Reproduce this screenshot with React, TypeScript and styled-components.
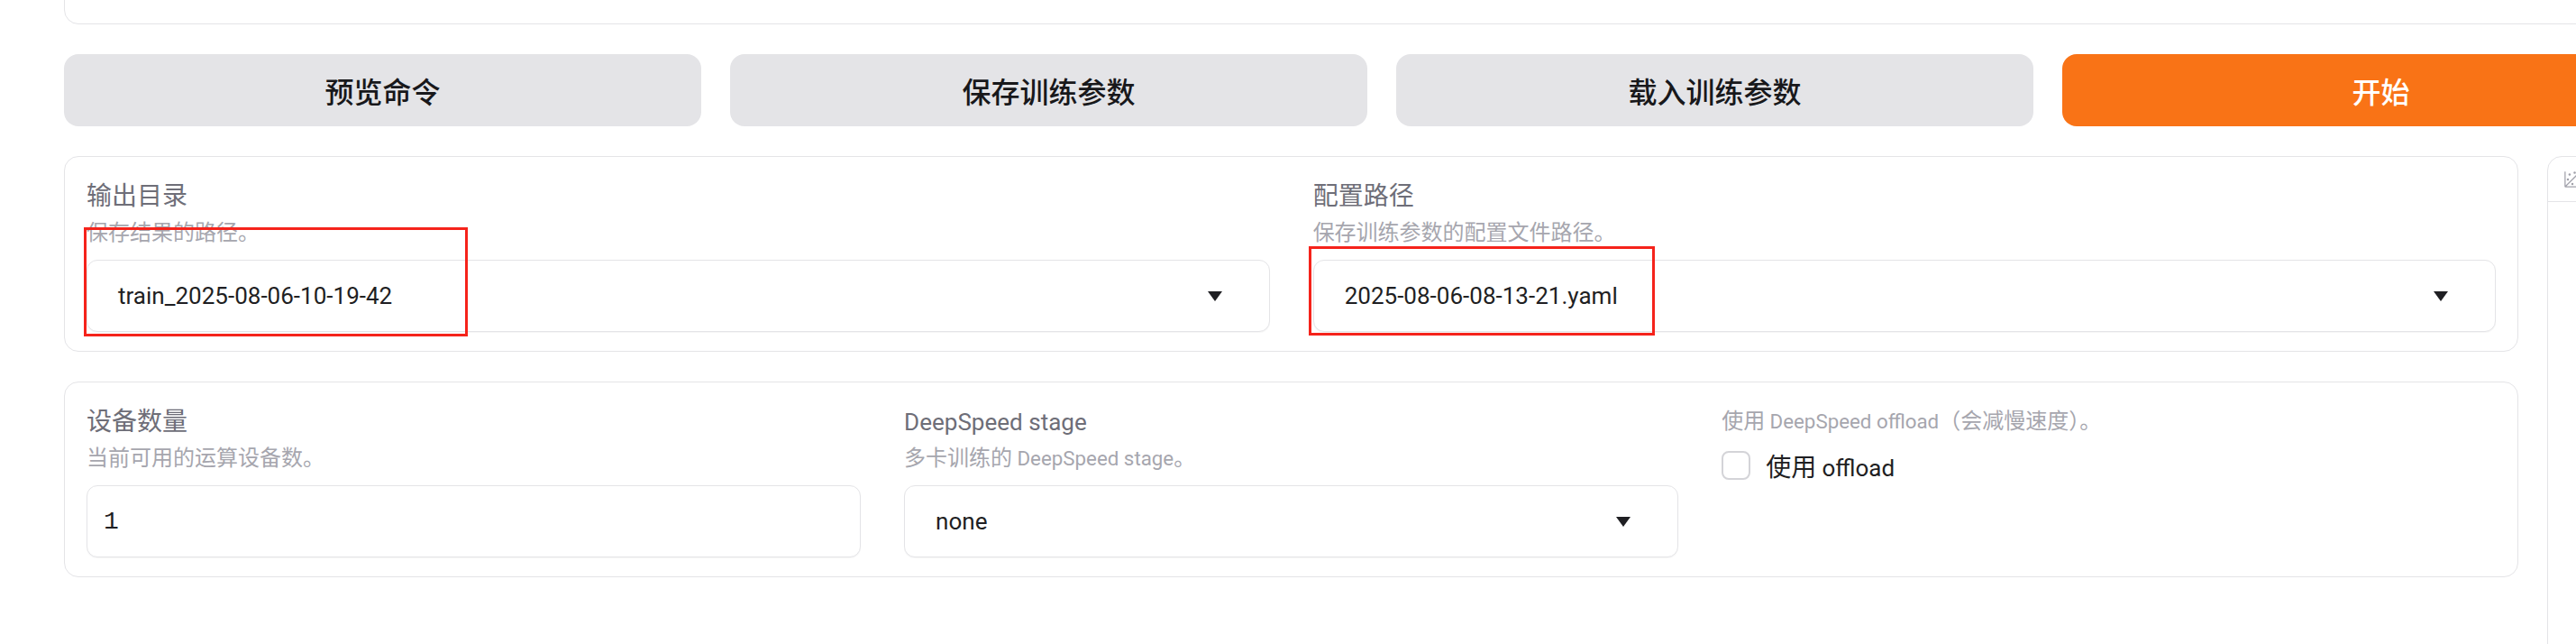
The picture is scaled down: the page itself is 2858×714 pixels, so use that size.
import React from "react";
import styled, { createGlobalStyle } from "styled-components";

const GlobalStyle = createGlobalStyle`
  html, body {
    margin: 0;
    padding: 0;
    background: #ffffff;
    overflow: hidden;
  }
  body {
    font-family: "Noto Sans CJK SC", "Noto Sans", sans-serif;
    color: #27272a;
  }
  * { box-sizing: border-box; }
`;

const Page = styled.div`
  position: relative;
  width: 3663px;
  margin-left: 71px;
  display: flex;
  flex-direction: column;
  gap: 33px;
`;

const TopCard = styled.div`
  height: 100px;
  margin-top: -73px;
  border: 1px solid #e4e4e7;
  border-radius: 16px;
  background: #fff;
`;

const ButtonRow = styled.div`
  display: flex;
  gap: 32px;
  height: 80px;
`;

const ActionButton = styled.button<{ $primary?: boolean }>`
  flex: 0 0 707px;
  border: none;
  border-radius: 16px;
  background: ${(p) => (p.$primary ? "#f97316" : "#e4e4e7")};
  color: ${(p) => (p.$primary ? "#ffffff" : "#18181b")};
  font-family: "Noto Sans CJK SC", sans-serif;
  font-size: 32px;
  font-weight: 500;
  cursor: pointer;
`;

const LowerRow = styled.div`
  display: flex;
  gap: 32px;
  align-items: flex-start;
`;

const MainColumn = styled.div`
  flex: 3;
  display: flex;
  flex-direction: column;
  gap: 33px;
`;

const SideColumn = styled.div`
  flex: 1;
`;

const Card = styled.div<{ $cols: number }>`
  display: grid;
  grid-template-columns: repeat(${(p) => p.$cols}, 1fr);
  border: 1px solid #e4e4e7;
  border-radius: 16px;
  background: #fff;
`;

const Field = styled.div`
  display: flex;
  flex-direction: column;
  padding: 20px 24px 21px;
  min-width: 0;
`;

const Latin = styled.span`
  font-family: Roboto, "Noto Sans", sans-serif;
  font-size: 0.93em;
  line-height: 1;
`;

const Label = styled.div`
  height: 42px;
  font-size: 28px;
  line-height: 42px;
  color: #6e6e78;
`;

const Info = styled.div<{ $top?: boolean }>`
  height: ${(p) => (p.$top ? "42px" : "36px")};
  font-size: 24px;
  line-height: ${(p) => (p.$top ? "42px" : "36px")};
  margin-top: ${(p) => (p.$top ? "0" : "2px")};
  color: #a6a6ae;
`;

const InputBox = styled.div<{ $padLeft?: number }>`
  margin-top: 14px;
  height: 80px;
  display: flex;
  align-items: center;
  justify-content: space-between;
  padding: 0 52px 0 ${(p) => p.$padLeft ?? 34}px;
  border: 1px solid #e4e4e7;
  border-radius: 12px;
  box-shadow: 0 1px 1px rgba(0, 0, 0, 0.04);
  background: #fff;
  font-size: 28px;
  color: #1f1f23;
`;

const MonoValue = styled.span`
  font-family: "Liberation Mono", "DejaVu Sans Mono", monospace;
  font-size: 28px;
  color: #1f1f23;
`;

const CheckRow = styled.label`
  margin-top: 14px;
  height: 32px;
  display: flex;
  align-items: center;
  gap: 17px;
  font-size: 28px;
  line-height: 32px;
  color: #1f1f23;
`;

const CheckBox = styled.span`
  width: 32px;
  height: 32px;
  border: 2px solid #d4d4d8;
  border-radius: 8px;
  background: #fff;
  flex: none;
`;

const PlotPanel = styled.div`
  height: 800px;
  border: 1px solid #e4e4e7;
  border-radius: 16px;
  background: #fff;
`;

const PlotLabel = styled.div`
  display: inline-flex;
  align-items: center;
  height: 50px;
  padding: 0 20px 0 17px;
  border-right: 1px solid #e4e4e7;
  border-bottom: 1px solid #e4e4e7;
  border-radius: 0 0 12px 0;
  color: #a1a1aa;
`;

const Annotation = styled.div<{ $left: number; $top: number; $w: number; $h: number }>`
  position: absolute;
  left: ${(p) => p.$left}px;
  top: ${(p) => p.$top}px;
  width: ${(p) => p.$w}px;
  height: ${(p) => p.$h}px;
  border: 3px solid #f5231b;
  pointer-events: none;
`;

const Arrow = () => (
  <svg width="16" height="11" viewBox="0 0 16 11" aria-hidden="true">
    <path d="M0 0H16L8 11Z" fill="#1f1f23" />
  </svg>
);

const PlotIcon = () => (
  <svg width="20" height="20" viewBox="0 0 32 32" aria-hidden="true">
    <circle cx="20" cy="4" r="2" fill="currentColor" />
    <circle cx="8" cy="16" r="2" fill="currentColor" />
    <circle cx="28" cy="12" r="2" fill="currentColor" />
    <circle cx="11" cy="7" r="2" fill="currentColor" />
    <circle cx="16" cy="24" r="2" fill="currentColor" />
    <path
      fill="currentColor"
      d="M30 3.413L28.586 2L4 26.585V2H2v26a2 2 0 0 0 2 2h26v-2H5.413Z"
    />
  </svg>
);

export default function App() {
  return (
    <>
      <GlobalStyle />
      <Page>
        <TopCard />
        <ButtonRow>
          <ActionButton>预览命令</ActionButton>
          <ActionButton>保存训练参数</ActionButton>
          <ActionButton>载入训练参数</ActionButton>
          <ActionButton $primary>开始</ActionButton>
        </ButtonRow>
        <LowerRow>
          <MainColumn>
            <Card $cols={2}>
              <Field>
                <Label>输出目录</Label>
                <Info>保存结果的路径。</Info>
                <InputBox>
                  <Latin>train_2025-08-06-10-19-42</Latin>
                  <Arrow />
                </InputBox>
              </Field>
              <Field>
                <Label>配置路径</Label>
                <Info>保存训练参数的配置文件路径。</Info>
                <InputBox>
                  <Latin>2025-08-06-08-13-21.yaml</Latin>
                  <Arrow />
                </InputBox>
              </Field>
            </Card>
            <Card $cols={3}>
              <Field>
                <Label>设备数量</Label>
                <Info>当前可用的运算设备数。</Info>
                <InputBox $padLeft={18}>
                  <MonoValue>1</MonoValue>
                </InputBox>
              </Field>
              <Field>
                <Label>
                  <Latin>DeepSpeed stage</Latin>
                </Label>
                <Info>
                  多卡训练的 <Latin>DeepSpeed stage</Latin>。
                </Info>
                <InputBox>
                  <Latin>none</Latin>
                  <Arrow />
                </InputBox>
              </Field>
              <Field>
                <Info $top>
                  使用 <Latin>DeepSpeed offload</Latin>（会减慢速度）。
                </Info>
                <CheckRow>
                  <CheckBox />
                  <span>
                    使用 <Latin>offload</Latin>
                  </span>
                </CheckRow>
              </Field>
            </Card>
          </MainColumn>
          <SideColumn>
            <PlotPanel>
              <PlotLabel>
                <PlotIcon />
              </PlotLabel>
            </PlotPanel>
          </SideColumn>
        </LowerRow>
        <Annotation $left={22} $top={252} $w={426} $h={121} />
        <Annotation $left={1381} $top={273} $w={384} $h={99} />
      </Page>
    </>
  );
}
